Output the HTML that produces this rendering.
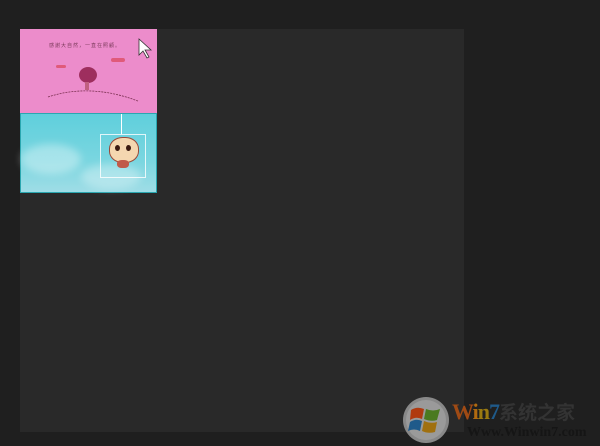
<!DOCTYPE html>
<html><head><meta charset="utf-8"><style>
html,body{margin:0;padding:0;width:600px;height:446px;background:#1f1f1f;overflow:hidden;position:relative;font-family:"Liberation Sans","Noto Sans CJK SC",sans-serif}
.panel{position:absolute;left:20px;top:29px;width:444px;height:403px;background:#292929}
.pink{position:absolute;left:20px;top:29px;width:137px;height:85px;background:#ec8ccb}
.blue{position:absolute;left:20px;top:113px;width:135px;height:78px;background:linear-gradient(180deg,#5fcfdc,#7ad6e0 60%,#9fdde6);border:1px solid #2aa7b0}
.abs{position:absolute}
</style></head><body>
<div class="panel"></div>
<div class="pink">
  <div class="abs" style="left:29px;top:13px;font-size:5px;color:#7a3a5a;letter-spacing:1px">感謝大自然，一直在照顧。</div>
  <div class="abs" style="left:36px;top:36px;width:10px;height:3px;background:#e05a7a;border-radius:2px"></div>
  <div class="abs" style="left:91px;top:29px;width:14px;height:4px;background:#e05a7a;border-radius:2px"></div>
  <div class="abs" style="left:59px;top:38px;width:18px;height:16px;background:#9e2e5e;border-radius:50%"></div>
  <div class="abs" style="left:65px;top:53px;width:4px;height:8px;background:#c06080"></div>
  <svg class="abs" style="left:0;top:0" width="137" height="85"><path d="M28 68 Q70 54 118 72" stroke="#7a3050" fill="none" stroke-width="0.8" stroke-dasharray="2 1"/>
  <path d="M119 10 L119 26 L123 22 L127 29 L129 28 L125 21 L131 21 Z" fill="#fff" stroke="#333" stroke-width="0.8"/></svg>
</div>
<div class="blue">
  <div class="abs" style="left:0;top:30px;width:60px;height:30px;background:rgba(255,255,255,.35);border-radius:50%;filter:blur(4px)"></div>
  <div class="abs" style="left:60px;top:50px;width:60px;height:25px;background:rgba(255,255,255,.3);border-radius:50%;filter:blur(4px)"></div>
  <div class="abs" style="left:79px;top:20px;width:44px;height:42px;border:1px solid rgba(255,255,255,.8)"></div>
  <div class="abs" style="left:100px;top:0;width:1px;height:20px;background:#fff"></div>
  <div class="abs" style="left:88px;top:23px;width:28px;height:24px;background:#f4d7b0;border-radius:45%;border:1px solid #9a4a3a"></div>
  <div class="abs" style="left:94px;top:31px;width:5px;height:6px;background:#3a1a10;border-radius:50%"></div>
  <div class="abs" style="left:105px;top:31px;width:5px;height:6px;background:#3a1a10;border-radius:50%"></div>
  <div class="abs" style="left:96px;top:46px;width:12px;height:8px;background:#c05a4a;border-radius:40%"></div>
</div>
<svg class="abs" style="left:402px;top:396px" width="48" height="48">
  <circle cx="24" cy="24" r="23" fill="#888"/><circle cx="24" cy="24" r="20" fill="#9a9a9a"/>
  <path d="M9 14 Q15 10 22 13 L20 23 Q14 20 8 24 Z" fill="#b03a10"/>
  <path d="M24 13 Q31 16 38 13 L35 24 Q29 26 22 23 Z" fill="#4a7a20"/>
  <path d="M8 26 Q14 22 20 25 L18 35 Q12 32 6 35 Z" fill="#1f5a8a"/>
  <path d="M22 25 Q29 28 35 26 L33 36 Q26 38 20 35 Z" fill="#a07010"/>
</svg>
<div class="abs" style="left:452px;top:398px;font-family:'Liberation Serif',serif;font-weight:bold;font-size:22px;letter-spacing:-1px;color:#a04a14">W<span style="color:#b06a10">i</span><span style="color:#9a7a10">n</span><span style="color:#1f5a8a">7</span><span style="color:#333;font-family:'Noto Sans CJK SC',sans-serif;font-size:19px;letter-spacing:0">系统之家</span></div>
<div class="abs" style="left:467px;top:425px;font-family:'Liberation Serif',serif;font-weight:bold;font-size:14px;color:#151515">Www.Winwin7.com</div>
</body></html>
